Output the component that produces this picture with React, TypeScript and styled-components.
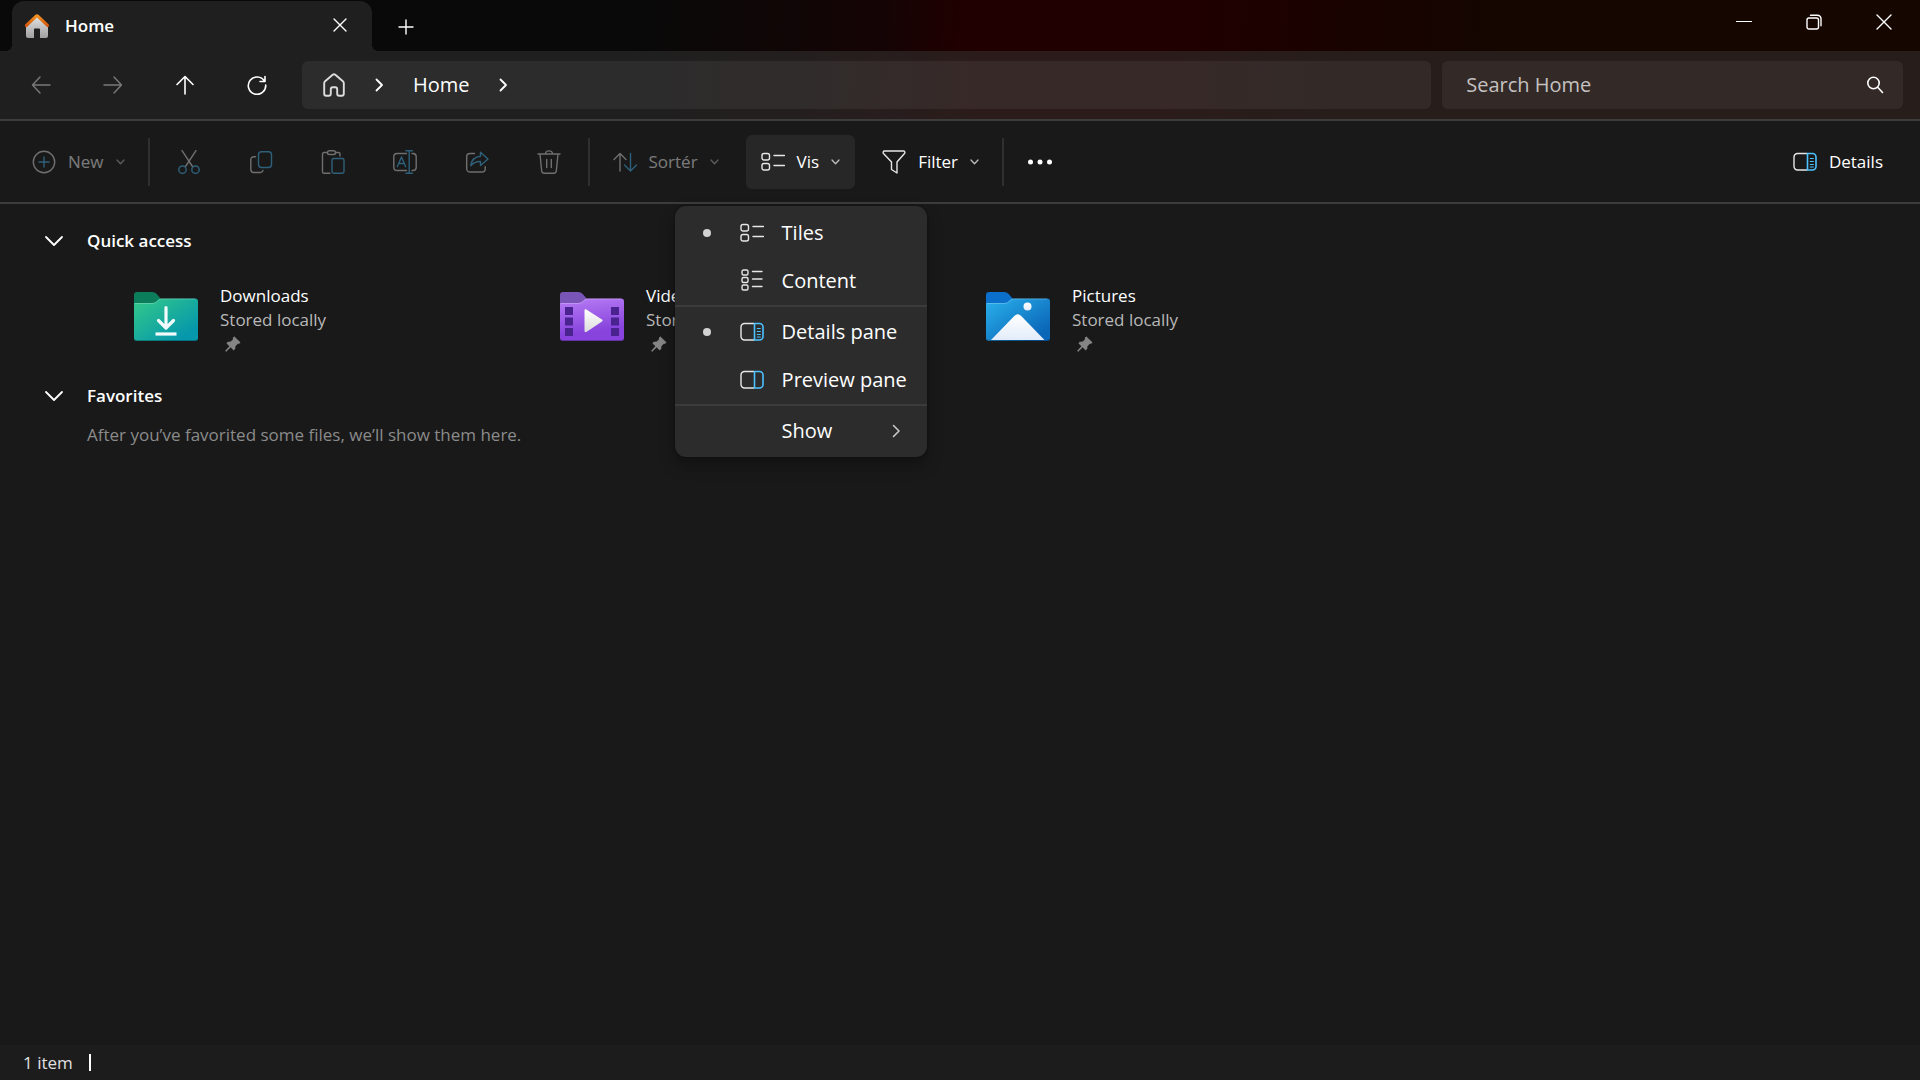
import React from "react";
import styled, { createGlobalStyle } from "styled-components";

const GlobalStyle = createGlobalStyle`
  *, *::before, *::after { box-sizing: border-box; }
  html, body, #root { height: 100%; }
  body {
    margin: 0;
    background: #191919;
    color: #fff;
    font-family: "Open Sans", "Noto Sans", sans-serif;
    font-size: 17px;
    line-height: 24px;
    overflow: hidden;
  }
  button, input { font: inherit; color: inherit; }
  svg { display: block; flex: none; }
`;

const accent = "#4cc2ff";

const Window = styled.div`
  display: flex;
  flex-direction: column;
  min-height: 100%;
`;

const PlainButton = styled.button`
  display: flex;
  align-items: center;
  justify-content: center;
  padding: 0;
  border: 0;
  background: transparent;
  &:disabled { color: #fff; }
`;

/* Title bar */

const TitleBar = styled.header`
  display: flex;
  height: 51px;
  padding: 0 1px 0 12px;
  background: linear-gradient(95deg, #090909 33%, #0f0606 40%, #150405 46%, #200000 50%, #200000 62%, #180300 71%, #150600 78%);
`;

const Tab = styled.div`
  position: relative;
  display: flex;
  align-items: center;
  width: 360px;
  margin-top: 1px;
  padding: 0 16px 0 12px;
  border-radius: 12px 12px 0 0;
  background: #1f1f1f;
  &::before, &::after {
    content: "";
    position: absolute;
    bottom: 0;
    width: 6px;
    height: 6px;
  }
  &::before { right: 100%; background: radial-gradient(circle at 0 0, transparent 6px, #1f1f1f 6px); }
  &::after { left: 100%; background: radial-gradient(circle at 100% 0, transparent 6px, #1f1f1f 6px); }
`;

const TabTitle = styled.span`
  flex: 1;
  margin-left: 15px;
  font-weight: 600;
`;

const TabButton = styled(PlainButton)`
  width: 32px;
  height: 32px;
  margin-bottom: 3px;
`;

const NewTabButton = styled(PlainButton)`
  width: 40px;
  margin: 3px 0 0 14px;
`;

const WindowControls = styled.div`
  display: flex;
  margin-left: auto;
  height: 43px;
`;

const ControlButton = styled(PlainButton)`
  width: 70px;
`;

/* Navigation bar */

const NavBar = styled.nav`
  display: flex;
  align-items: center;
  height: 70px;
  padding: 0 17px 0 5px;
  border-bottom: 2px solid #3c3c3c;
  background: linear-gradient(95deg, #1f1f1f 33%, #241f1e 42%, #2b1c1b 51%, #2b1c1b 60%, #271d1b 69%);
`;

const NavButton = styled(PlainButton)`
  width: 72px;
  height: 48px;
  svg { opacity: ${(p) => (p.disabled ? 0.4 : 1)}; }
`;

const Field = styled.div`
  display: flex;
  align-items: center;
  height: 48px;
  border-radius: 6px;
  background: rgba(255, 255, 255, 0.06);
`;

const AddressBar = styled(Field)`
  flex: 1;
  margin: 0 11px 0 9px;
  padding-left: 20px;
  gap: 29px;
`;

const Crumb = styled(PlainButton)`
  font-size: 20px;
  line-height: 28px;
`;

const SearchBox = styled(Field)`
  width: 24vw;
  padding: 0 19px 0 24px;
`;

const SearchInput = styled.input`
  flex: 1;
  min-width: 0;
  padding: 0;
  border: 0;
  outline: 0;
  background: transparent;
  font-size: 20px;
  line-height: 28px;
  &::placeholder { color: #c5c1c0; opacity: 1; }
`;

/* Command bar */

const CommandBar = styled.div`
  display: flex;
  align-items: center;
  height: 83px;
  padding: 0 22px 0 9px;
  border-bottom: 2px solid #3c3c3c;
`;

const Command = styled(PlainButton)<{ $active?: boolean }>`
  gap: 12px;
  height: 54px;
  padding: 0 15px;
  border-radius: 6px;
  background: ${(p) => (p.$active ? "#272727" : "transparent")};
  > * { opacity: ${(p) => (p.disabled ? 0.42 : 1)}; }
`;

const IconCommand = styled(Command)`
  width: 48px;
  padding: 0;
`;

const IconGroup = styled.div<{ $pad: number }>`
  display: flex;
  gap: 24px;
  padding: 0 ${(p) => p.$pad}px;
`;

const CommandGroup = styled.div`
  display: flex;
  gap: 12px;
  padding: 0 8px;
`;

const Divider = styled.span`
  width: 2px;
  height: 48px;
  background: #2f2f2f;
`;

const Spacer = styled.span`
  flex: 1;
`;

const MenuAnchor = styled.div`
  position: relative;
`;

const Menu = styled.div`
  position: absolute;
  z-index: 2;
  top: 71px;
  left: -71px;
  width: 252px;
  padding: 3px 0 2px;
  border-radius: 11px;
  background: #2c2c2c;
  box-shadow: 0 0 2px #0c0c0c, 0 8px 16px rgba(0, 0, 0, 0.3);
`;

const MenuItem = styled.button`
  display: grid;
  grid-template-columns: 37px 42px 1fr 24px;
  align-items: center;
  width: 100%;
  height: 48px;
  padding: 0 11px 0 28px;
  border: 0;
  background: transparent;
  font-size: 20px;
  line-height: 28px;
  text-align: left;
  white-space: nowrap;
`;

const Bullet = styled.span<{ $on?: boolean }>`
  width: 8px;
  height: 8px;
  border-radius: 50%;
  background: ${(p) => (p.$on ? "#d2d2d2" : "transparent")};
`;

const MenuRule = styled.hr`
  height: 2px;
  margin: 0 0 1px;
  border: 0;
  background: #3b3b3b;
`;

/* Content */

const Main = styled.main`
  flex: 1;
  padding: 19px 24px 0 44px;
`;

const SectionTitle = styled.h2`
  margin: 0;
  font-size: 17px;
  line-height: 36px;
  font-weight: 600;
`;

const SectionToggle = styled(PlainButton)`
  gap: 23px;
  height: 36px;
`;

const Folders = styled.ul`
  display: grid;
  grid-template-columns: repeat(auto-fill, 426px);
  margin: 0;
  padding: 25px 0 24px 90px;
  list-style: none;
`;

const Folder = styled.li`
  display: flex;
  align-items: flex-start;
  gap: 22px;
  height: 70px;
`;

const FolderIcon = styled.div`
  padding-top: 8px;
`;

const FolderText = styled.div<{ $muted?: boolean }>`
  color: ${(p) => (p.$muted ? "#b8b8b8" : "#fff")};
`;

const PinRow = styled.div`
  display: flex;
  align-items: center;
  height: 24px;
  padding-left: 5px;
`;

const EmptyNote = styled.p`
  margin: 9px 0 0 43px;
  color: #8b8b8b;
`;

const StatusBar = styled.footer`
  display: flex;
  align-items: center;
  gap: 16px;
  height: 35px;
  padding-left: 23px;
  background: #1c1c1c;
  color: #e0e0e0;
`;

const StatusMark = styled.span`
  width: 2px;
  height: 17px;
  background: #fff;
`;

/* Icons */

type IconProps = { w?: number; h?: number; sw?: number; color?: string; children: React.ReactNode };

const Icon = ({ w = 24, h = 24, sw = 1.4, color = "#e6e6e6", children }: IconProps) => (
  <svg width={w} height={h} viewBox={`0 0 ${w} ${h}`} fill="none" stroke={color} strokeWidth={sw} strokeLinecap="round" strokeLinejoin="round" aria-hidden="true">
    {children}
  </svg>
);

const HomeColor = () => (
  <svg width="26" height="26" viewBox="0 0 26 26" aria-hidden="true">
    <defs>
      <linearGradient id="wall" x1="0" y1="0" x2="0" y2="1">
        <stop offset="0" stopColor="#e4e4e4" />
        <stop offset="1" stopColor="#a0a0a0" />
      </linearGradient>
      <linearGradient id="roof" x1="0" y1="0" x2="0" y2="1">
        <stop offset="0" stopColor="#f79a26" />
        <stop offset="1" stopColor="#cf4e08" />
      </linearGradient>
    </defs>
    <path d="M2 12 13 3l11 9v11a2 2 0 0 1-2 2h-6v-8.500a1 1 0 0 0-1-1h-4a1 1 0 0 0-1 1V25H4a2 2 0 0 1-2-2Z" fill="url(#wall)" />
    <path d="M11.500 1.800a2.300 2.300 0 0 1 3 0l10 9.400c.6.600.7 1.700.2 2.400-.5.700-1.300.8-1.900.2L13 4.600 3.200 13.800c-.6.600-1.500.5-2-.2-.5-.7-.4-1.800.2-2.400Z" fill="url(#roof)" />
  </svg>
);

const Cross = ({ s = 14 }: { s?: number }) => (
  <Icon w={s} h={s} color="#fff" sw={1.4}><path d={`M1 1 ${s - 1} ${s - 1}M${s - 1} 1 1 ${s - 1}`} /></Icon>
);

const Chevron = () => (
  <Icon w={9} h={8} color="#bdbdbd" sw={1.3}><path d="M1 2l3.500 3.700L8 2" /></Icon>
);

const CrumbChevron = () => (
  <Icon w={9} h={14} color="#fff" sw={1.8}><path d="M1.500 1.500 7 7l-5.500 5.500" /></Icon>
);

const TilesIcon = () => (
  <Icon>
    <rect x="1" y="3.500" width="7.500" height="6.500" rx="2" />
    <rect x="1" y="13.500" width="7.500" height="6.500" rx="2" />
    <path d="M13 5.500h10.500M13 15.500h10.500" />
  </Icon>
);

const ContentIcon = () => (
  <Icon>
    <rect x="2" y="1" width="6" height="5" rx="1.500" />
    <rect x="2" y="8.500" width="6" height="5" rx="1.500" />
    <rect x="2" y="16" width="6" height="5" rx="1.500" />
    <path d="M12.500 2.500h9.500M12.500 10h9.500M12.500 17.500h9.500" />
  </Icon>
);

const PaneIcon = ({ lines }: { lines?: boolean }) => (
  <Icon>
    <path d="M14 3.500H4.500a3.500 3.500 0 0 0-3.500 3.500v9.500a3.500 3.500 0 0 0 3.500 3.500H14" />
    <path d="M14.500 3.500h5a3.500 3.500 0 0 1 3.500 3.500v9.500a3.500 3.500 0 0 1-3.500 3.500h-5Z" stroke={accent} strokeWidth="1.600" />
    {lines && <path d="M17.300 8.500h3M17.300 11.500h3M17.300 14.500h3M17.300 17h3" stroke={accent} strokeWidth="1.200" />}
  </Icon>
);

const PinIcon = () => (
  <svg width="16" height="16" viewBox="0 0 16 16" aria-hidden="true">
    <path d="M9.200.8 15.200 6.600 13.600 7.600 12.700 7.500 10.100 10.200 9.800 13 8.600 13.900 5.600 11 1 15.400.5 14.900 4.800 10.200 1.800 7.300 2.800 6.200 5.700 5.900 8.400 3.200 8.200 2Z" fill="#858585" stroke="#9a9a9a" strokeWidth=".6" />
  </svg>
);

type FolderKind = "downloads" | "videos" | "pictures";

const palettes: Record<FolderKind, [string, string, string]> = {
  downloads: ["#0c7d5b", "#2fc48d", "#0597ac"],
  videos: ["#7a55b8", "#b276f2", "#8743dc"],
  pictures: ["#0b70cc", "#27a9e6", "#0a66b8"],
};

const FolderDrawing = ({ kind }: { kind: FolderKind }) => {
  const [back, from, to] = palettes[kind];
  return (
    <svg width="64" height="50" viewBox="0 0 64 50" aria-hidden="true">
      <defs>
        <linearGradient id={`${kind}-front`} x1="0" y1="0" x2={kind === "videos" ? "0.2" : "1"} y2="1">
          <stop offset="0.1" stopColor={from} />
          <stop offset="0.85" stopColor={to} />
        </linearGradient>
        <linearGradient id={`${kind}-glyph`} x1="0" y1="0" x2="0" y2="1">
          <stop offset="0" stopColor="#fff" />
          <stop offset="1" stopColor={kind === "videos" ? "#dcdcdc" : "#e2ecfa"} />
        </linearGradient>
      </defs>
      <path d="M0 3a3 3 0 0 1 3-3h15c2 0 3.500.7 4.700 2L27 7H60v8H0Z" fill={back} />
      <path d="M0 11h18c2 0 3.300-.5 4.600-1.700L25 7.300c.8-.6 1.600-.8 2.600-.8H61a3 3 0 0 1 3 3V46a3 3 0 0 1-3 3H3a3 3 0 0 1-3-3Z" fill={`url(#${kind}-front)`} />
      <path d="M1 11.500h17c2 0 3.300-.5 4.600-1.700L25 7.800c.8-.6 1.600-.8 2.600-.8H61" fill="none" stroke="#fff" strokeOpacity=".22" />
      <path d="M1 47.700a3 3 0 0 0 2 .8H61a3 3 0 0 0 2-.8" fill="none" stroke="#000" strokeOpacity=".25" />
      {kind === "downloads" && (
        <g fill="none" stroke="#f2fbfb" strokeWidth="3.200" strokeLinecap="round" strokeLinejoin="round">
          <path d="M32 15.500v20M24.500 28.500 32 36l7.500-7.500" />
          <path d="M21.500 42h21" strokeLinecap="butt" />
        </g>
      )}
      {kind === "videos" && (
        <g>
          <path d="M5 15h8v8H5ZM5 25.500h8v8H5ZM5 36h8v8H5ZM51 15h8v8h-8ZM51 25.500h8v8h-8ZM51 36h8v8h-8Z" fill="#4b2391" />
          <path d="M24.500 18.500c0-1 1-1.500 1.800-1L42 27.600c.8.500.8 1.400 0 1.900L26.300 40c-.8.500-1.800 0-1.800-1Z" fill="url(#videos-glyph)" />
        </g>
      )}
      {kind === "pictures" && (
        <g fill="url(#pictures-glyph)">
          <circle cx="41.500" cy="14.500" r="4" />
          <path d="M5 48 28.500 23.800c2-2 4.500-2 6.500 0L58.500 48Z" />
        </g>
      )}
    </svg>
  );
};

const folders: { name: string; kind: FolderKind }[] = [
  { name: "Downloads", kind: "downloads" },
  { name: "Videos", kind: "videos" },
  { name: "Pictures", kind: "pictures" },
];

const Section = ({ title, children }: { title: string; children: React.ReactNode }) => (
  <section>
    <SectionToggle aria-expanded="true">
      <Icon w={20} h={12} color="#fff" sw={1.8}><path d="M2 2l8 8 8-8" /></Icon>
      <SectionTitle>{title}</SectionTitle>
    </SectionToggle>
    {children}
  </section>
);

export default function App() {
  return (
    <>
      <GlobalStyle />
      <Window>
        <TitleBar>
          <Tab>
            <HomeColor />
            <TabTitle>Home</TabTitle>
            <TabButton aria-label="Close tab"><Cross /></TabButton>
          </Tab>
          <NewTabButton aria-label="New tab">
            <Icon w={16} h={16} color="#fff"><path d="M8 1v14M1 8h14" /></Icon>
          </NewTabButton>
          <WindowControls>
            <ControlButton aria-label="Minimize"><Icon w={16} h={16} color="#fff" sw={1.2}><path d="M.5 7.500h15" /></Icon></ControlButton>
            <ControlButton aria-label="Restore">
              <Icon w={16} h={16} color="#fff">
                <rect x="1" y="4" width="11.500" height="11" rx="2" />
                <path d="M4.500 1.200h7a3.500 3.500 0 0 1 3.500 3.500v7" />
              </Icon>
            </ControlButton>
            <ControlButton aria-label="Close"><Cross s={16} /></ControlButton>
          </WindowControls>
        </TitleBar>

        <NavBar aria-label="Navigation">
          <NavButton disabled aria-label="Back"><Icon w={20} h={20} color="#fff"><path d="M19 10H1.500M9 2 1.500 10 9 18" /></Icon></NavButton>
          <NavButton disabled aria-label="Forward"><Icon w={20} h={20} color="#fff"><path d="M1 10h17.500M11 2l7.500 8-7.500 8" /></Icon></NavButton>
          <NavButton aria-label="Up"><Icon w={20} h={20} color="#fff" sw={1.6}><path d="M10 19V1.500M2 9.500l8-8 8 8" /></Icon></NavButton>
          <NavButton aria-label="Refresh">
            <Icon w={20} h={20} color="#fff" sw={1.6}><path d="M17.500 6.200A8.700 8.700 0 1 0 18.700 10M18 1.500v5h-5" /></Icon>
          </NavButton>
          <AddressBar>
            <Crumb aria-label="Home location">
              <Icon color="#dcdcdc" sw={1.9}>
                <path d="M2.200 10.200c0-.8.300-1.400.9-1.900l7.600-6.600a2 2 0 0 1 2.600 0l7.600 6.600c.6.500.9 1.100.9 1.900v10.600a2 2 0 0 1-2 2h-2.600a2 2 0 0 1-2-2v-4.600a2 2 0 0 0-2-2h-2.400a2 2 0 0 0-2 2v4.600a2 2 0 0 1-2 2H4.200a2 2 0 0 1-2-2Z" />
              </Icon>
            </Crumb>
            <CrumbChevron />
            <Crumb>Home</Crumb>
            <CrumbChevron />
          </AddressBar>
          <SearchBox>
            <SearchInput type="search" aria-label="Search Home" placeholder="Search Home" />
            <Icon w={18} h={18} color="#fff" sw={1.6}><circle cx="7.500" cy="7" r="5.700" /><path d="M11.700 11.300 16.500 16.500" /></Icon>
          </SearchBox>
        </NavBar>

        <CommandBar role="toolbar" aria-label="Commands">
          <CommandGroup>
            <Command disabled>
              <Icon>
                <circle cx="12" cy="12" r="10.700" />
                <path d="M12 7v10M7 12h10" stroke={accent} />
              </Icon>
              <span>New</span>
              <Chevron />
            </Command>
          </CommandGroup>
          <Divider />
          <IconGroup $pad={15}>
            <IconCommand disabled aria-label="Cut">
              <Icon>
                <path d="M5 .7 15.500 16.500M19 .7 8.500 16.500" />
                <g stroke={accent}><circle cx="5.500" cy="19.700" r="3.700" /><circle cx="18.500" cy="19.700" r="3.700" /></g>
              </Icon>
            </IconCommand>
            <IconCommand disabled aria-label="Copy">
              <Icon>
                <path d="M6.500 6.700H4.800A3 3 0 0 0 1.800 9.700v9.800a3 3 0 0 0 3 3h6.400a3 3 0 0 0 2.800-2" />
                <rect x="9.500" y="1.700" width="13" height="15.800" rx="3" stroke={accent} />
              </Icon>
            </IconCommand>
            <IconCommand disabled aria-label="Paste">
              <Icon>
                <path d="M6.300 2.500H3a1.500 1.500 0 0 0-1.500 1.500v18A1.500 1.500 0 0 0 3 23.300h6M14.500 2.500h3A1.500 1.500 0 0 1 19 4v2" />
                <rect x="6.500" y=".8" width="8" height="3.700" rx="1.800" />
                <rect x="11" y="8.500" width="12" height="14.800" rx="1.700" stroke={accent} />
              </Icon>
            </IconCommand>
            <IconCommand disabled aria-label="Rename">
              <Icon>
                <path d="M13.500 3.500H4A3.300 3.300 0 0 0 .8 6.800v10.400A3.300 3.300 0 0 0 4 20.500h9.500M19 3.500h1a3.300 3.300 0 0 1 3.200 3.300v10.400a3.300 3.300 0 0 1-3.200 3.300h-1" />
                <path d="M4.300 16.700 8.500 7l4.200 9.700M5.800 13.500h5.400M16.200.8v22.500M13 .8h6.500M13 23.300h6.500" stroke={accent} />
              </Icon>
            </IconCommand>
            <IconCommand disabled aria-label="Share">
              <Icon>
                <path d="M9.500 3.500H5a3.300 3.300 0 0 0-3.300 3.300v11.900A3.300 3.300 0 0 0 5 22h11.900a3.300 3.300 0 0 0 3.300-3.300v-2" />
                <path d="M15.500 2.200 23 9l-7.500 6.500v-4c-4-.2-7 1-9.700 4.300.5-5.300 3.700-9 9.700-9.600Z" stroke={accent} />
              </Icon>
            </IconCommand>
            <IconCommand disabled aria-label="Delete">
              <Icon>
                <path d="M1 4h22M8.500 4C8.500-.2 15.500-.2 15.500 4M3 4l1.700 17.200a2.300 2.300 0 0 0 2.300 2h10a2.300 2.300 0 0 0 2.300-2L21 4M9.700 9.500v8M14.300 9.500v8" />
              </Icon>
            </IconCommand>
          </IconGroup>
          <Divider />
          <CommandGroup>
            <Command disabled>
              <Icon>
                <path d="M7 21V3.500M1 9.500l6-6 6 6" />
                <path d="M17.500 3.500V21M11.500 15l6 6 6-6" stroke={accent} />
              </Icon>
              <span>Sortér</span>
              <Chevron />
            </Command>
            <MenuAnchor>
              <Command $active aria-haspopup="menu" aria-expanded="true">
                <TilesIcon />
                <span>Vis</span>
                <Chevron />
              </Command>
              <Menu role="menu">
                <MenuItem role="menuitem"><Bullet $on /><TilesIcon /><span>Tiles</span></MenuItem>
                <MenuItem role="menuitem"><Bullet /><ContentIcon /><span>Content</span></MenuItem>
                <MenuRule />
                <MenuItem role="menuitem"><Bullet $on /><PaneIcon lines /><span>Details pane</span></MenuItem>
                <MenuItem role="menuitem"><Bullet /><PaneIcon /><span>Preview pane</span></MenuItem>
                <MenuRule />
                <MenuItem role="menuitem">
                  <Bullet />
                  <span />
                  <span>Show</span>
                  <Icon w={9} h={14} color="#c8c8c8" sw={1.6}><path d="M1.500 1.500 7 7l-5.500 5.500" /></Icon>
                </MenuItem>
              </Menu>
            </MenuAnchor>
            <Command>
              <Icon>
                <path d="M2.500 1h19c1.300 0 1.800 1.500 1 2.500L15 12v11l-5.500-3.500V12L1.500 3.500C.700 2.500 1.200 1 2.500 1Z" />
              </Icon>
              <span>Filter</span>
              <Chevron />
            </Command>
          </CommandGroup>
          <Divider />
          <IconGroup $pad={12}>
            <IconCommand aria-label="See more">
              <svg width="24" height="24" viewBox="0 0 24 24" fill="#fff" aria-hidden="true">
                <circle cx="2.500" cy="12" r="2.500" /><circle cx="12" cy="12" r="2.500" /><circle cx="21.500" cy="12" r="2.500" />
              </svg>
            </IconCommand>
          </IconGroup>
          <Spacer />
          <Command aria-pressed="true">
            <PaneIcon lines />
            <span>Details</span>
          </Command>
        </CommandBar>

        <Main>
          <Section title="Quick access">
            <Folders>
              {folders.map(({ name, kind }) => (
                <Folder key={kind}>
                  <FolderIcon><FolderDrawing kind={kind} /></FolderIcon>
                  <div>
                    <FolderText>{name}</FolderText>
                    <FolderText $muted>Stored locally</FolderText>
                    <PinRow><PinIcon /></PinRow>
                  </div>
                </Folder>
              ))}
            </Folders>
          </Section>
          <Section title="Favorites">
            <EmptyNote>After you’ve favorited some files, we’ll show them here.</EmptyNote>
          </Section>
        </Main>

        <StatusBar>
          <span>1 item</span>
          <StatusMark />
        </StatusBar>
      </Window>
    </>
  );
}
